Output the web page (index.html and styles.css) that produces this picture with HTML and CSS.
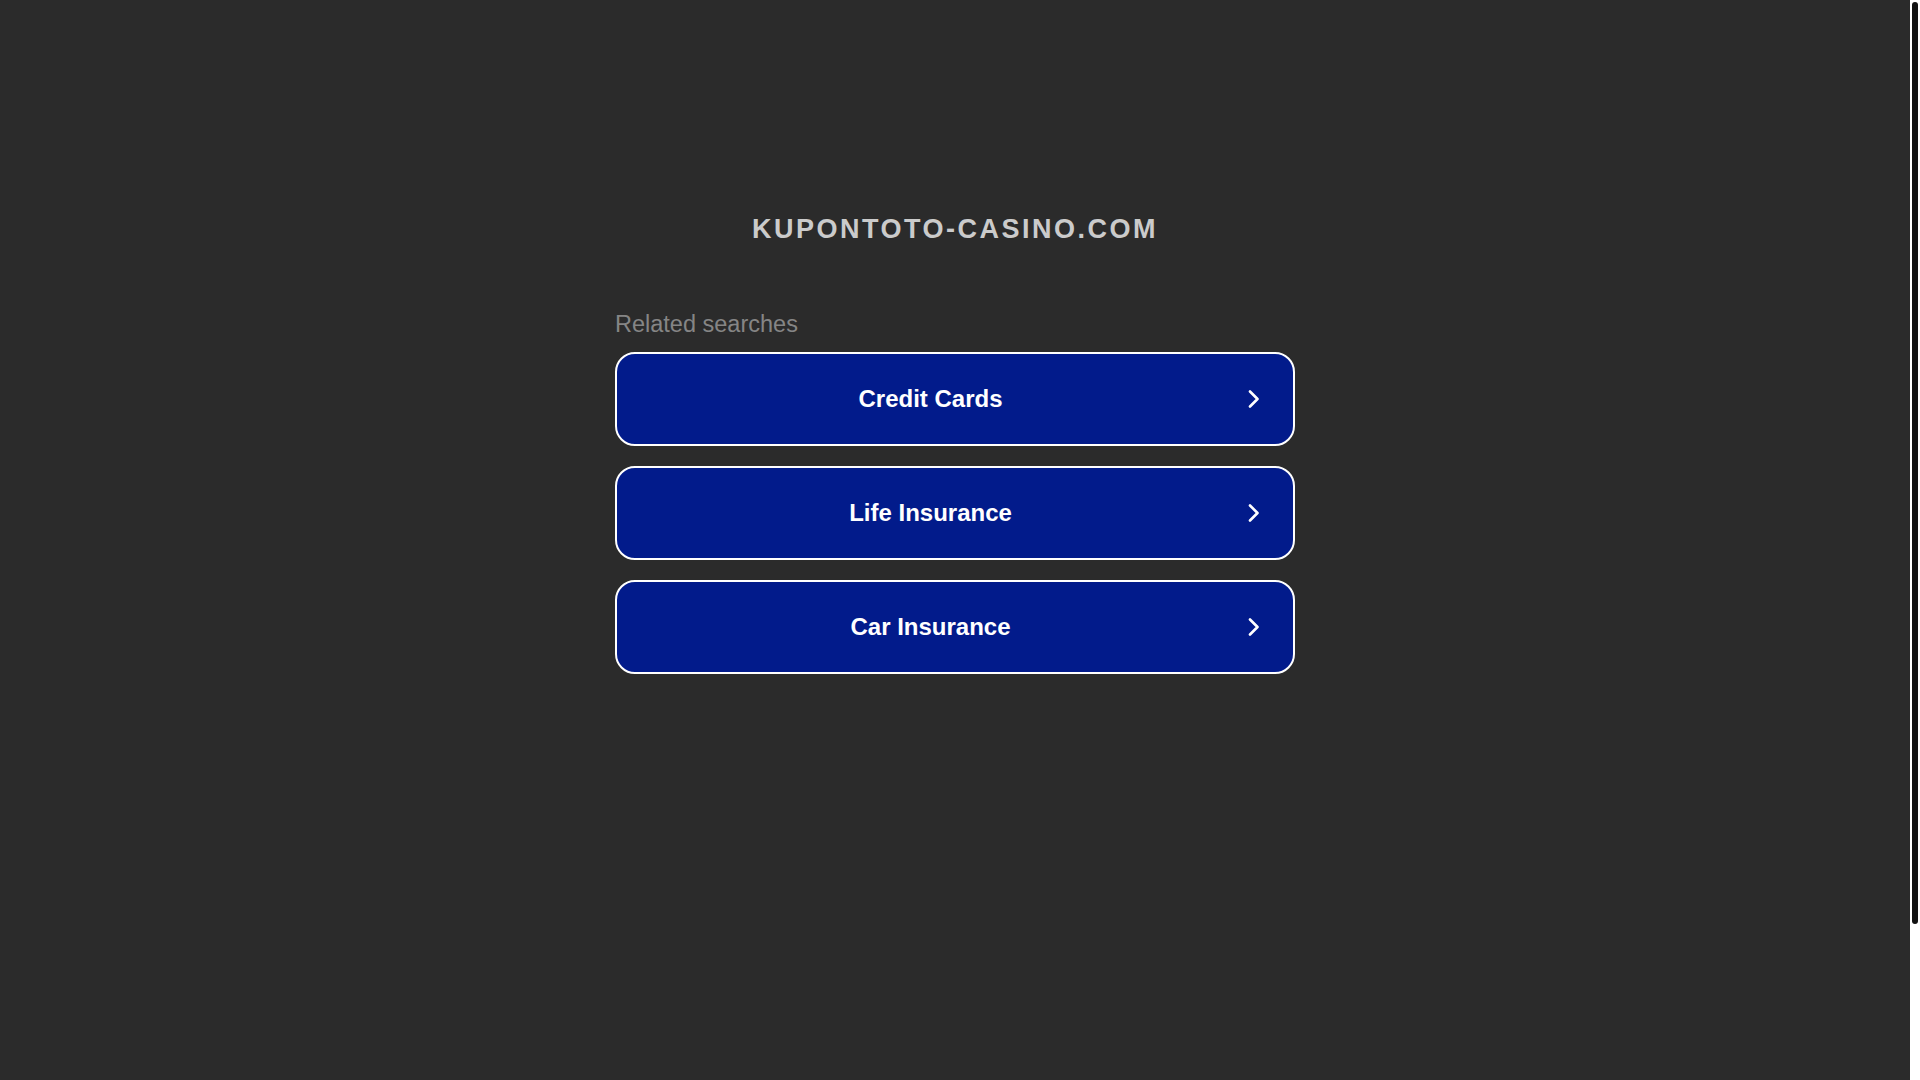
FILE: index.html
```html
<!DOCTYPE html>
<html lang="en">
<head>
    <meta charset="UTF-8">
    <meta name="viewport" content="width=device-width, initial-scale=1.0">
    <title>kupontoto-casino.com</title>
    <link rel="stylesheet" href="styles.css">
</head>
<body>
    <div class="page">
        <h1 class="domain">kupontoto-casino.com</h1>
        <div class="related">
            <p class="related-title">Related searches</p>
            <div class="links">
                <a class="link" href="#">
                    <span class="label">Credit Cards</span>
                    <svg class="arrow" width="12" height="18" viewBox="0 0 12 18"><path d="M2 1.5 L9.5 9 L2 16.5" fill="none" stroke="#fff" stroke-width="2.6" stroke-linecap="round" stroke-linejoin="round"/></svg>
                </a>
                <a class="link" href="#">
                    <span class="label">Life Insurance</span>
                    <svg class="arrow" width="12" height="18" viewBox="0 0 12 18"><path d="M2 1.5 L9.5 9 L2 16.5" fill="none" stroke="#fff" stroke-width="2.6" stroke-linecap="round" stroke-linejoin="round"/></svg>
                </a>
                <a class="link" href="#">
                    <span class="label">Car Insurance</span>
                    <svg class="arrow" width="12" height="18" viewBox="0 0 12 18"><path d="M2 1.5 L9.5 9 L2 16.5" fill="none" stroke="#fff" stroke-width="2.6" stroke-linecap="round" stroke-linejoin="round"/></svg>
                </a>
            </div>
        </div>
    </div>
    <div class="scrollbar">
        <div class="thumb"></div>
    </div>
</body>
</html>
```

FILE: styles.css
```css
body {
    margin: 0;
    height: 100vh;
    overflow: hidden;
    display: flex;
    background-color: #2b2b2b;
    font-family: "Liberation Sans", Arial, sans-serif;
}
.page {
    flex: 1;
    display: flex;
    flex-direction: column;
    align-items: center;
}
.domain {
    margin: 213px 0 0;
    font-size: 27px;
    line-height: 32px;
    font-weight: bold;
    letter-spacing: 2.5px;
    text-transform: uppercase;
    color: #cbcbcb;
}
.related {
    width: 680px;
    margin-top: 66px;
}
.related-title {
    margin: 0 0 14px;
    font-size: 23.5px;
    line-height: 27px;
    color: #858585;
}
.links {
    display: flex;
    flex-direction: column;
    gap: 20px;
}
.link {
    display: flex;
    align-items: center;
    height: 94px;
    box-sizing: border-box;
    border: 2px solid #fff;
    border-radius: 20px;
    background: #021b8b;
    color: #fff;
    text-decoration: none;
}
.label {
    flex: 1;
    text-align: center;
    font-size: 24px;
    font-weight: bold;
}
.arrow {
    margin: 0 33px 0 4px;
}
/* page scroll track on the right edge */
.scrollbar {
    width: 10px;
    background: #fff;
    padding: 2px;
    box-sizing: border-box;
}
.thumb {
    height: 922px;
    background: #111;
    border-radius: 3px;
}
```
